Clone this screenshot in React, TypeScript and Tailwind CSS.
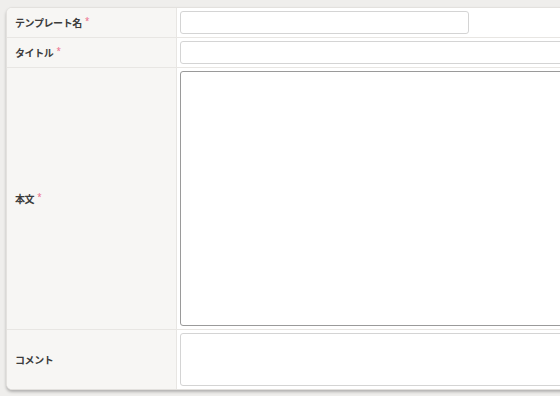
import React from "react";

const font = { fontFamily: '"Noto Sans CJK JP", "Noto Sans", sans-serif' };

function Label({ text, required }: { text: string; required?: boolean }) {
  return (
    <div className="w-[170px] shrink-0 bg-[#f7f6f4] border-r border-[#e8e6e3] flex items-center pl-[8px]">
      <span className="text-[10px] font-bold text-[#3c3c3c] tracking-[-0.4px]" style={font}>
        {text}
      </span>
      {required && <span className="ml-[3px] -mt-[3px] text-[8px] text-[#ec6a88] leading-none">*</span>}
    </div>
  );
}

export default function App() {
  return (
    <div className="w-[560px] h-[396px] bg-[#efeeec] overflow-hidden pt-[7px] pl-[6px]">
      <div className="w-[600px] bg-white rounded-[6px] border border-[#e3e1de] shadow-[0_2px_3px_rgba(0,0,0,0.25)] overflow-hidden">
        <div className="flex h-[30px] border-b border-[#e8e6e3]">
          <Label text="テンプレート名" required />
          <div className="flex-1 px-[3px] pt-[3px]">
            <div className="w-[289px] h-[23px] rounded-[3px] border border-[#d4d4d4] bg-white" />
          </div>
        </div>
        <div className="flex h-[30px] border-b border-[#e8e6e3]">
          <Label text="タイトル" required />
          <div className="flex-1 px-[3px] pt-[3px]">
            <div className="w-full h-[23px] rounded-[3px] border border-[#d4d4d4] bg-white" />
          </div>
        </div>
        <div className="flex h-[262px] border-b border-[#e8e6e3]">
          <Label text="本文" required />
          <div className="flex-1 px-[3px] pt-[3px]">
            <div className="w-full h-[255px] rounded-[3px] border border-[#9a9a9a] bg-white" />
          </div>
        </div>
        <div className="flex h-[59px]">
          <Label text="コメント" />
          <div className="flex-1 px-[3px] pt-[3px]">
            <div className="w-full h-[53px] rounded-[3px] border border-[#d4d4d4] bg-white" />
          </div>
        </div>
      </div>
    </div>
  );
}
